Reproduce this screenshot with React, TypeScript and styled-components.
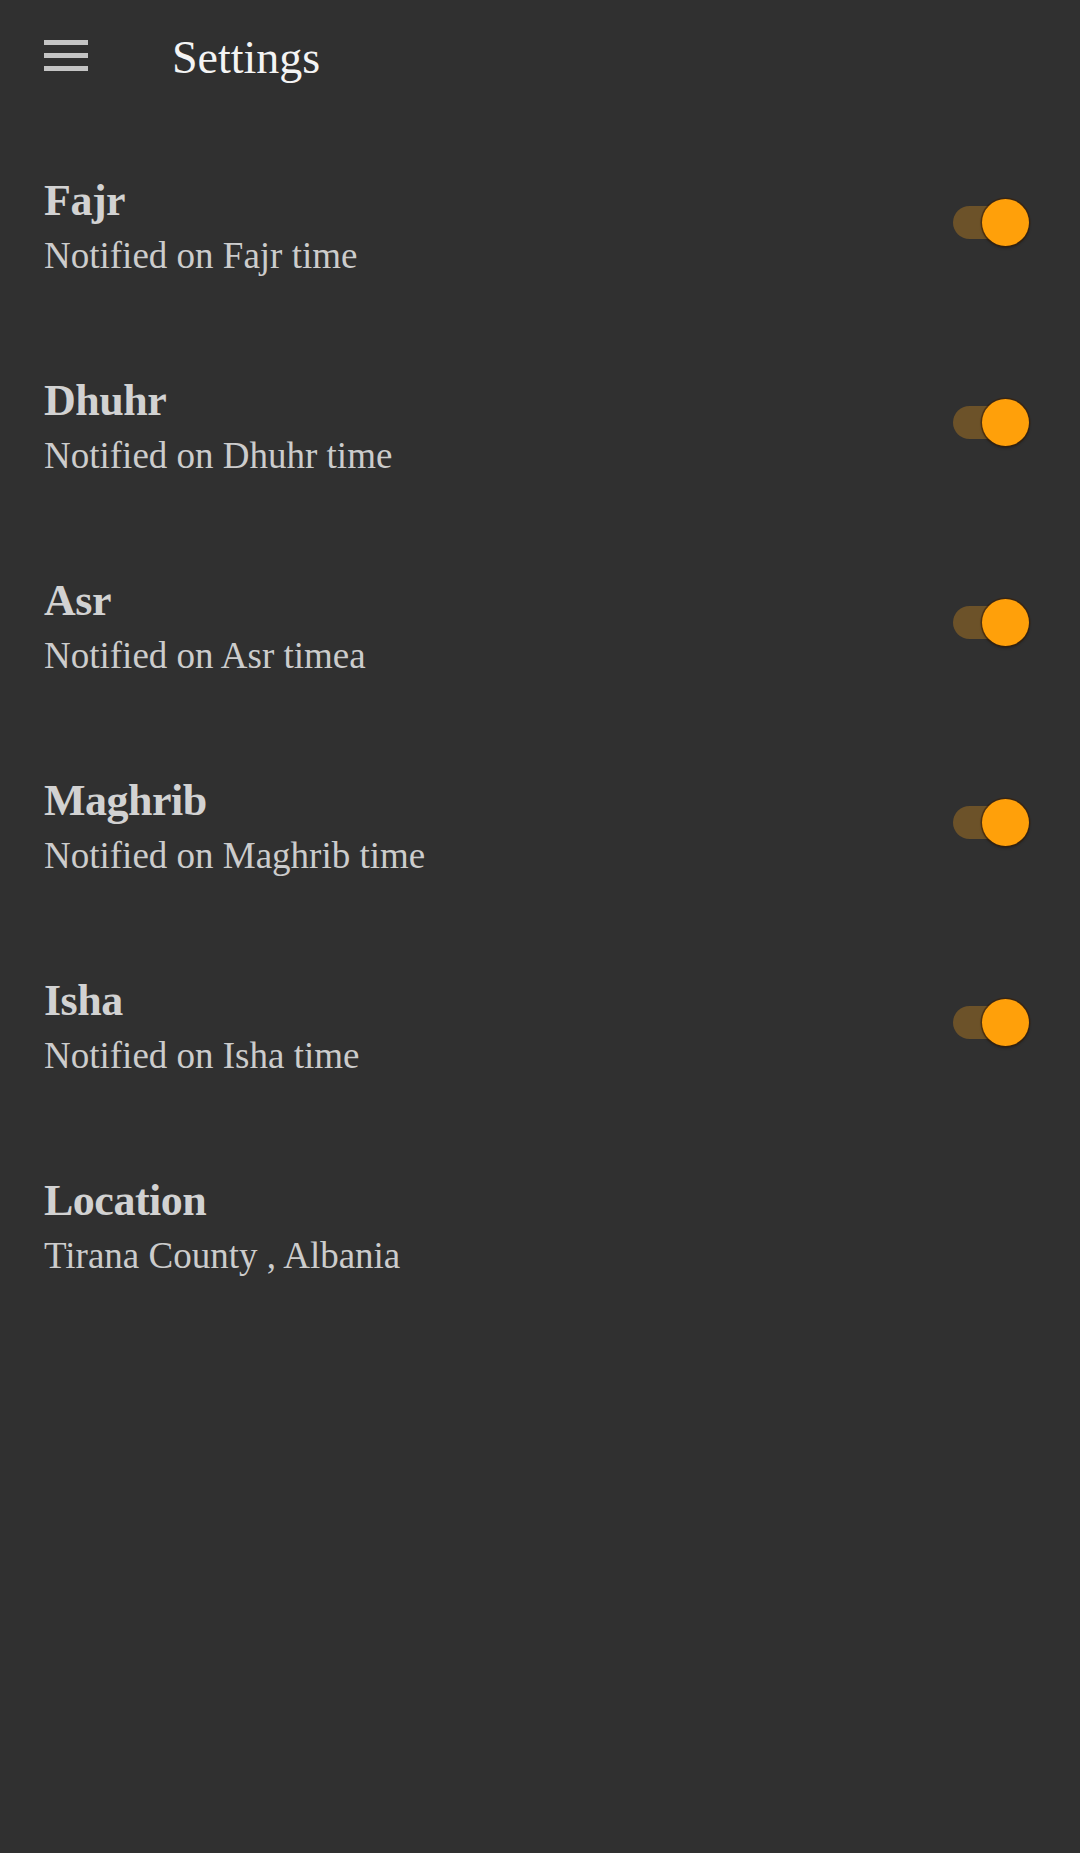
import React from "react";
import styled, { createGlobalStyle } from "styled-components";

const GlobalStyle = createGlobalStyle`
  html, body {
    margin: 0;
    padding: 0;
    background: #303030;
  }
  body {
    font-family: "Liberation Serif", "DejaVu Serif", serif;
  }
`;

const Page = styled.div`
  width: 1080px;
  min-height: 1853px;
  background: #303030;
  display: flex;
  flex-direction: column;
`;

const Toolbar = styled.header`
  height: 116px;
  display: flex;
  align-items: center;
  padding-left: 44px;
  gap: 84px;
`;

const MenuButton = styled.div`
  width: 44px;
  height: 31px;
  margin-bottom: 6px;
  display: flex;
  flex-direction: column;
  justify-content: space-between;
`;

const MenuBar = styled.span`
  display: block;
  height: 5px;
  background: #c4c4c4;
`;

const Title = styled.h1`
  margin: 0;
  font-size: 46px;
  line-height: 56px;
  font-weight: 400;
  color: #f4f4f4;
`;

const List = styled.main`
  padding-top: 11px;
  display: flex;
  flex-direction: column;
`;

const Row = styled.div`
  height: 200px;
  display: flex;
  align-items: center;
  justify-content: space-between;
  padding: 0 51px 0 44px;
`;

const TextBlock = styled.div`
  display: flex;
  flex-direction: column;
`;

const RowTitle = styled.div`
  font-size: 44px;
  line-height: 52px;
  font-weight: 700;
  color: #d2d2d2;
  letter-spacing: -0.5px;
`;

const RowSubtitle = styled.div`
  margin-top: 5px;
  font-size: 37px;
  line-height: 48px;
  color: #cccccc;
`;

const Switch = styled.div<{ $on: boolean }>`
  position: relative;
  width: 76px;
  height: 47px;
  margin-bottom: 10px;
  display: flex;
  align-items: center;
`;

const Track = styled.span<{ $on: boolean }>`
  display: block;
  width: 70px;
  height: 33px;
  border-radius: 17px;
  background: ${(p) => (p.$on ? "#6c5229" : "#5a5a5a")};
`;

const Thumb = styled.span<{ $on: boolean }>`
  position: absolute;
  top: 0;
  ${(p) => (p.$on ? "right: 0;" : "left: 0;")}
  width: 47px;
  height: 47px;
  border-radius: 50%;
  background: ${(p) => (p.$on ? "#ffa00a" : "#bdbdbd")};
  box-shadow: 0 0 0 1.5px rgba(60, 30, 0, 0.55), 0 2px 3px rgba(0, 0, 0, 0.35);
`;

type Item = { title: string; subtitle: string; toggle: boolean };

const items: Item[] = [
  { title: "Fajr", subtitle: "Notified on Fajr time", toggle: true },
  { title: "Dhuhr", subtitle: "Notified on Dhuhr time", toggle: true },
  { title: "Asr", subtitle: "Notified on Asr timea", toggle: true },
  { title: "Maghrib", subtitle: "Notified on Maghrib time", toggle: true },
  { title: "Isha", subtitle: "Notified on Isha time", toggle: true },
  { title: "Location", subtitle: "Tirana County , Albania", toggle: false },
];

export default function App() {
  return (
    <Page>
      <GlobalStyle />
      <Toolbar>
        <MenuButton>
          <MenuBar />
          <MenuBar />
          <MenuBar />
        </MenuButton>
        <Title>Settings</Title>
      </Toolbar>
      <List>
        {items.map((it) => (
          <Row key={it.title}>
            <TextBlock>
              <RowTitle>{it.title}</RowTitle>
              <RowSubtitle>{it.subtitle}</RowSubtitle>
            </TextBlock>
            {it.toggle && (
              <Switch $on>
                <Track $on />
                <Thumb $on />
              </Switch>
            )}
          </Row>
        ))}
      </List>
    </Page>
  );
}
